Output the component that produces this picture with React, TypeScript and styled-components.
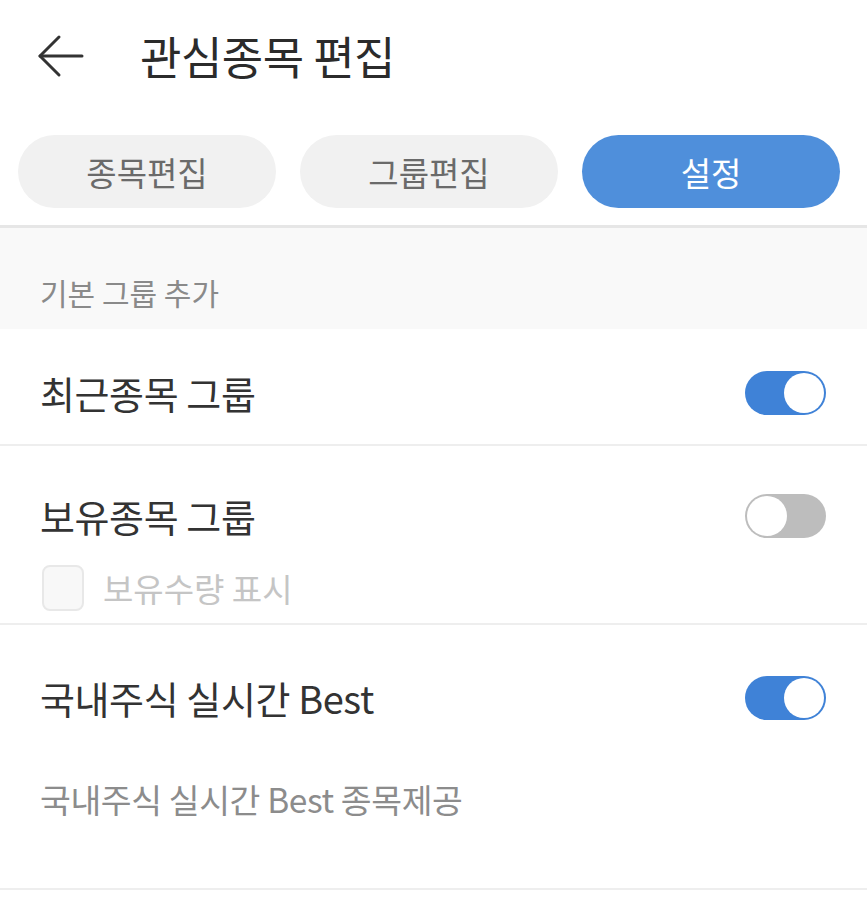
import { FC, useState } from 'react'
import styled, { createGlobalStyle } from 'styled-components';

const GlobalStyle = createGlobalStyle`
    html, body {
        margin: 0;
        padding: 0;
        background: #ffffff;
    }
    body {
        font-family: "Noto Sans CJK KR", "Noto Sans", sans-serif;
        color: #333333;
    }
`;

const Page = styled.div`
    width: 867px;
    height: 905px;
    overflow: hidden;
    background: #ffffff;
`;

const Header = styled.header`
    height: 116px;
    display: flex;
    align-items: center;
    padding-left: 36px;
    padding-bottom: 4px;
    box-sizing: border-box;
`;

const BackButton = styled.button`
    width: 50px;
    height: 50px;
    padding: 0;
    border: none;
    background: none;
    display: flex;
    align-items: center;
    justify-content: center;
`;

const Title = styled.h1`
    margin: 0 0 0 54px;
    font-size: 45px;
    font-weight: 400;
    line-height: 56px;
    color: #2b2b2b;
    letter-spacing: -0.5px;
`;

const Tabs = styled.nav`
    display: grid;
    grid-template-columns: repeat(3, 258px);
    column-gap: 24px;
    padding: 19px 0 17px 18px;
    border-bottom: 3px solid #e6e6e6;
`;

const Tab = styled.button<{ $active?: boolean }>`
    height: 73px;
    border: none;
    border-radius: 37px;
    font-family: inherit;
    font-size: 33px;
    font-weight: 400;
    background: ${p => (p.$active ? '#4f8fdb' : '#f1f1f1')};
    color: ${p => (p.$active ? '#ffffff' : '#6a6a6a')};
`;

const SectionHeader = styled.div`
    height: 101px;
    box-sizing: border-box;
    background: #f9f9f9;
    padding: 42px 0 0 40px;
    font-size: 30px;
    line-height: 44px;
    color: #8a8a8a;
`;

const Row = styled.div<{ $height: number }>`
    height: ${p => p.$height}px;
    box-sizing: border-box;
    padding: 0 41px 0 40px;
    border-bottom: 2px solid #eeeeee;
`;

const RowHead = styled.div<{ $top: number }>`
    display: flex;
    align-items: center;
    justify-content: space-between;
    padding-top: ${p => p.$top}px;
`;

const RowTitle = styled.div`
    font-size: 38px;
    line-height: 44px;
    color: #333333;
    letter-spacing: -0.4px;
`;

const Track = styled.button<{ $on: boolean }>`
    width: 81px;
    height: 44px;
    padding: 2px;
    border: none;
    border-radius: 22px;
    display: flex;
    justify-content: ${p => (p.$on ? 'flex-end' : 'flex-start')};
    background: ${p => (p.$on ? '#3f82d7' : '#bdbdbd')};
    cursor: pointer;
`;

const Knob = styled.span`
    width: 40px;
    height: 40px;
    border-radius: 50%;
    background: #ffffff;
`;

const CheckRow = styled.label`
    display: flex;
    align-items: center;
    margin-top: 27px;
    margin-left: 2px;
    gap: 19px;
    font-size: 33px;
    line-height: 44px;
    color: #c5c5c5;
`;

const CheckBox = styled.span`
    width: 42px;
    height: 46px;
    box-sizing: border-box;
    border: 2px solid #e8e8e8;
    border-radius: 8px;
    background: #f8f8f8;
`;

const Description = styled.div`
    margin-top: 57px;
    font-size: 33.5px;
    line-height: 44px;
    color: #8c8c8c;
    letter-spacing: -0.4px;
`;

const Toggle: FC<{ initial: boolean }> = ({ initial }) => {
    const [on, setOn] = useState(initial);
    return (
        <Track $on={on} onClick={() => setOn(!on)}>
            <Knob />
        </Track>
    );
};

const BackArrow = () => (
    <svg width="48" height="44" viewBox="0 0 48 44" fill="none" stroke="#333" strokeWidth="3" strokeLinecap="round" strokeLinejoin="round">
        <path d="M45 22H3" />
        <path d="M22 3L3 22l19 19" />
    </svg>
);

const App: FC = () => {
    const tabs = ['종목편집', '그룹편집', '설정'];

    return (
        <Page>
            <GlobalStyle />
            <Header>
                <BackButton>
                    <BackArrow />
                </BackButton>
                <Title>관심종목 편집</Title>
            </Header>
            <Tabs>
                {tabs.map((t, i) => (
                    <Tab key={t} $active={i === 2}>{t}</Tab>
                ))}
            </Tabs>
            <SectionHeader>기본 그룹 추가</SectionHeader>
            <Row $height={117}>
                <RowHead $top={42}>
                    <RowTitle>최근종목 그룹</RowTitle>
                    <Toggle initial={true} />
                </RowHead>
            </Row>
            <Row $height={179}>
                <RowHead $top={48}>
                    <RowTitle>보유종목 그룹</RowTitle>
                    <Toggle initial={false} />
                </RowHead>
                <CheckRow>
                    <CheckBox />
                    보유수량 표시
                </CheckRow>
            </Row>
            <Row $height={265}>
                <RowHead $top={51}>
                    <RowTitle>국내주식 실시간 Best</RowTitle>
                    <Toggle initial={true} />
                </RowHead>
                <Description>국내주식 실시간 Best 종목제공</Description>
            </Row>
        </Page>
    );
};

export default App;
